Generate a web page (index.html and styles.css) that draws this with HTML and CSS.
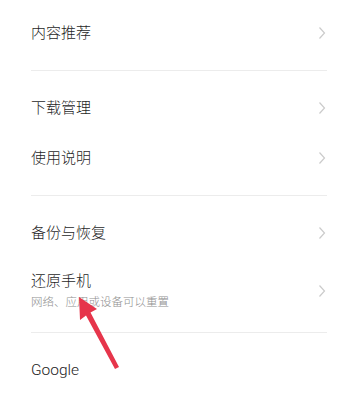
FILE: index.html
```html
<!DOCTYPE html>
<html lang="zh-CN">
<head>
<meta charset="utf-8">
<link rel="stylesheet" href="styles.css">
</head>
<body>
<main class="list">
  <div class="row"><span class="title">内容推荐</span><svg class="chev" viewBox="0 0 8 14"><polyline points="1.5,1.5 6.5,7 1.5,12.5"/></svg></div>
  <div class="divider"></div>
  <div class="row"><span class="title">下载管理</span><svg class="chev" viewBox="0 0 8 14"><polyline points="1.5,1.5 6.5,7 1.5,12.5"/></svg></div>
  <div class="row"><span class="title">使用说明</span><svg class="chev" viewBox="0 0 8 14"><polyline points="1.5,1.5 6.5,7 1.5,12.5"/></svg></div>
  <div class="divider"></div>
  <div class="row"><span class="title">备份与恢复</span><svg class="chev" viewBox="0 0 8 14"><polyline points="1.5,1.5 6.5,7 1.5,12.5"/></svg></div>
  <div class="row two"><div class="texts"><span class="title">还原手机</span><span class="sub">网络、应用或设备可以重置</span></div><svg class="chev" viewBox="0 0 8 14"><polyline points="1.5,1.5 6.5,7 1.5,12.5"/></svg></div>
  <div class="divider"></div>
  <div class="row"><span class="title latin">Google</span></div>
</main>
<svg class="arrow" viewBox="0 0 351 403" width="351" height="403">
  <path d="M79 297 L97 309 L90.5 312.5 L119 367 L115 369 L86 315.5 L80 320 Z"/>
</svg>
</body>
</html>
```
FILE: styles.css
```css
html, body {
  margin: 0;
  padding: 0;
  background: #ffffff;
}
body {
  width: 351px;
  height: 403px;
  overflow: hidden;
  position: relative;
  font-family: "Roboto", "Noto Sans CJK SC", sans-serif;
}
.list {
  display: flex;
  flex-direction: column;
  padding: 8px 24px 0 31px;
}
.row {
  height: 50px;
  display: flex;
  align-items: center;
  justify-content: space-between;
}
.row.two {
  height: 62px;
  box-sizing: border-box;
  padding: 13px 0 10px;
  align-items: center;
}
.texts {
  display: flex;
  flex-direction: column;
}
.title {
  font-size: 15px;
  line-height: 20px;
  font-weight: 300;
  color: #1f1f1f;
}
.title.latin {
  font-size: 15.5px;
  color: #222222;
}
.sub {
  font-size: 11.5px;
  line-height: 16px;
  margin-top: 3px;
  font-weight: 300;
  color: #8f8f8f;
}
.chev {
  width: 8px;
  height: 14px;
  margin-right: 1px;
  fill: none;
  stroke: #cbcbcb;
  stroke-width: 1.2;
}
.divider {
  height: 1px;
  margin: 12px 0;
  background: #ececec;
}
.arrow {
  position: absolute;
  left: 0;
  top: 0;
  fill: #e6354b;
}
```
